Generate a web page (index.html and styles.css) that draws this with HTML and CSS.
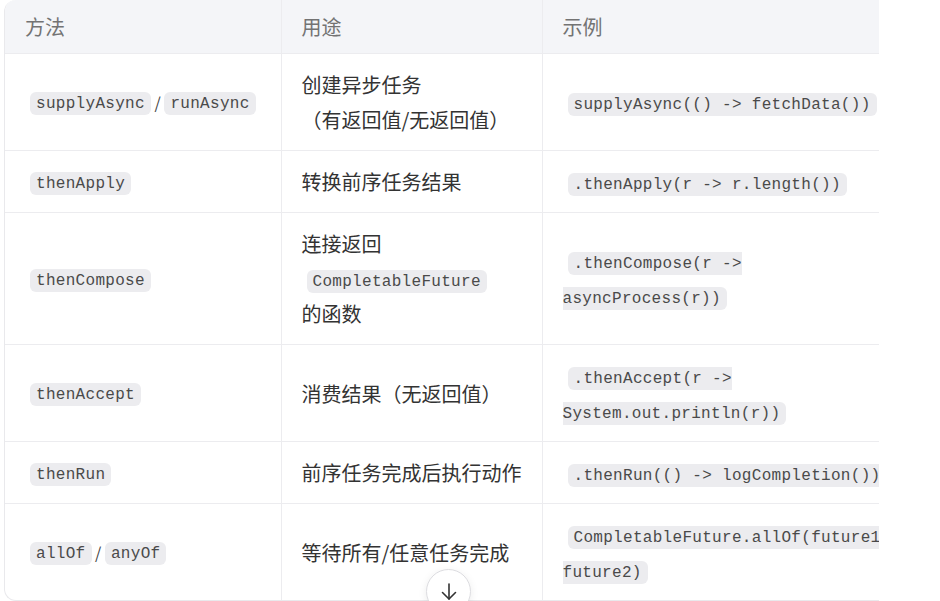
FILE: index.html
```html
<!DOCTYPE html>
<html lang="zh-CN">
<head>
<meta charset="utf-8">
<title>CompletableFuture 方法</title>
<link rel="stylesheet" href="styles.css">
</head>
<body>
<div class="page">
  <div class="table-wrap">
    <table class="api-table">
      <colgroup>
        <col class="c1">
        <col class="c2">
        <col class="c3">
      </colgroup>
      <thead>
        <tr><th>方法</th><th>用途</th><th>示例</th></tr>
      </thead>
      <tbody>
        <tr>
          <td class="method"><code>supplyAsync</code> / <code>runAsync</code></td>
          <td>创建异步任务<span class="keep">（有返回值/无返回值）</span></td>
          <td><code>supplyAsync(() -&gt; fetchData())</code></td>
        </tr>
        <tr>
          <td class="method"><code>thenApply</code></td>
          <td>转换前序任务结果</td>
          <td><code>.thenApply(r -&gt; r.length())</code></td>
        </tr>
        <tr>
          <td class="method"><code>thenCompose</code></td>
          <td>连接返回 <code>CompletableFuture</code> <span class="keep">的函数</span></td>
          <td><code>.thenCompose(r -&gt; asyncProcess(r))</code></td>
        </tr>
        <tr>
          <td class="method"><code>thenAccept</code></td>
          <td>消费结果（无返回值）</td>
          <td><code>.thenAccept(r -&gt; System.out.println(r))</code></td>
        </tr>
        <tr>
          <td class="method"><code>thenRun</code></td>
          <td>前序任务完成后执行动作</td>
          <td><code>.thenRun(() -&gt; logCompletion())</code></td>
        </tr>
        <tr>
          <td class="method"><code>allOf</code> / <code>anyOf</code></td>
          <td>等待所有/任意任务完成</td>
          <td><code>CompletableFuture.allOf(future1, future2)</code></td>
        </tr>
      </tbody>
    </table>
  </div>
  <button class="scroll-down" type="button" aria-label="滚动到底部">
    <svg width="22" height="22" viewBox="0 0 22 22" fill="none" stroke="#333" stroke-width="1.6" stroke-linecap="round" stroke-linejoin="round">
      <path d="M11 3v15"/>
      <path d="M4.5 11.5L11 18l6.5-6.5"/>
    </svg>
  </button>
</div>
</body>
</html>
```

FILE: styles.css
```css
html, body {
  margin: 0;
  padding: 0;
  background: #ffffff;
  overflow: hidden;
}

body {
  font-family: "Noto Sans CJK SC", "Noto Sans", sans-serif;
  color: #333333;
}

.page {
  padding-left: 4px;
  width: 875px;
}

.table-wrap {
  width: 874px;
  height: 600px;
  overflow: hidden;
  border-left: 1px solid #e9e9ec;
  border-bottom: 1px solid #e9e9ec;
  border-radius: 12px 0 0 12px;
}

.api-table {
  border-collapse: collapse;
  table-layout: fixed;
  width: 917px;
}

.c1 { width: 276px; }
.c2 { width: 261px; }
.c3 { width: 380px; }

.api-table th {
  background: #f4f5f8;
  color: #737373;
  font-weight: 400;
  font-size: 20px;
  line-height: 35px;
  text-align: left;
  padding: 9px 16px 9px 20px;
  border-bottom: 1px solid #ececef;
  border-left: 1px solid #ececef;
}

.api-table td {
  font-size: 20px;
  line-height: 35px;
  padding: 13px 14px 13px 20px;
  vertical-align: middle;
  border-bottom: 1px solid #ececef;
  border-left: 1px solid #ececef;
}

.api-table th:first-child,
.api-table td:first-child {
  border-left: none;
}

.api-table td.method {
  white-space: nowrap;
  font-size: 16px;
  color: #444444;
  word-spacing: -2px;
  padding-left: 23px;
}

.keep {
  white-space: nowrap;
}

.api-table code {
  font-family: "Liberation Mono", monospace;
  font-size: 16px;
  line-height: 18px;
  letter-spacing: 0.3px;
  word-spacing: 0;
  color: #4a4a4a;
  background: #ececef;
  border-radius: 6px;
  padding: 2.5px 6px;
  margin: 0 5px;
  vertical-align: 2px;
}

.api-table td.method code {
  margin: 0 2px;
  vertical-align: 1px;
}

.scroll-down {
  position: fixed;
  left: 426px;
  top: 569px;
  width: 45px;
  height: 45px;
  border-radius: 50%;
  border: 1px solid #dcdce0;
  background: #ffffff;
  box-shadow: 0 2px 8px rgba(0, 0, 0, 0.08);
  display: flex;
  align-items: center;
  justify-content: center;
  padding: 0;
  cursor: pointer;
}
```
